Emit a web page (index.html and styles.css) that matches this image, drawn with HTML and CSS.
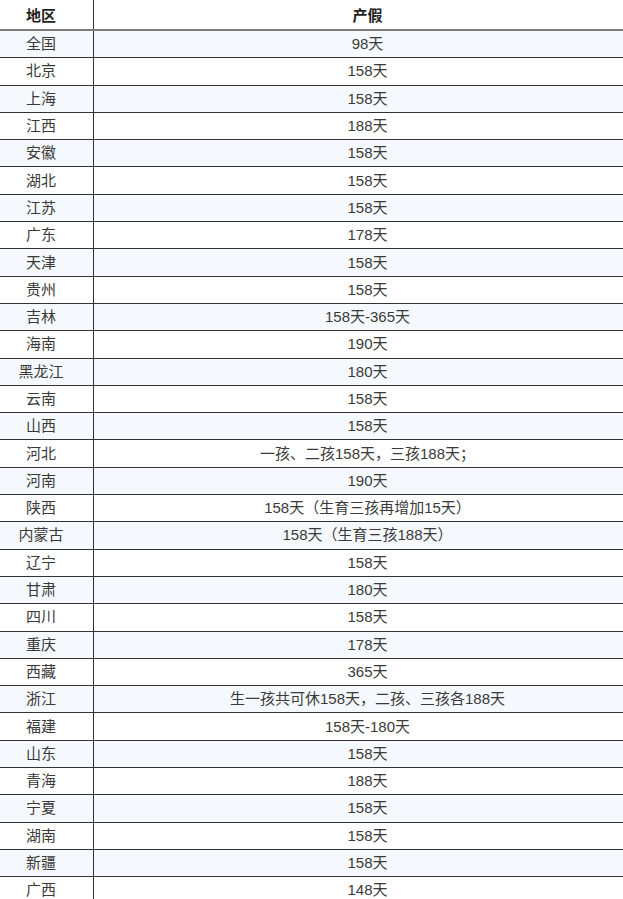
FILE: index.html
```html
<!DOCTYPE html>
<html lang="zh">
<head>
<meta charset="utf-8">
<link rel="stylesheet" href="styles.css">
</head>
<body>
<table class="leave">
<thead>
<tr><th class="c1">地区</th><th class="c2">产假</th></tr>
</thead>
<tbody>
<tr><td>全国</td><td>98天</td></tr>
<tr><td>北京</td><td>158天</td></tr>
<tr><td>上海</td><td>158天</td></tr>
<tr><td>江西</td><td>188天</td></tr>
<tr><td>安徽</td><td>158天</td></tr>
<tr><td>湖北</td><td>158天</td></tr>
<tr><td>江苏</td><td>158天</td></tr>
<tr><td>广东</td><td>178天</td></tr>
<tr><td>天津</td><td>158天</td></tr>
<tr><td>贵州</td><td>158天</td></tr>
<tr><td>吉林</td><td>158天-365天</td></tr>
<tr><td>海南</td><td>190天</td></tr>
<tr><td>黑龙江</td><td>180天</td></tr>
<tr><td>云南</td><td>158天</td></tr>
<tr><td>山西</td><td>158天</td></tr>
<tr><td>河北</td><td>一孩、二孩158天，三孩188天；</td></tr>
<tr><td>河南</td><td>190天</td></tr>
<tr><td>陕西</td><td>158天（生育三孩再增加15天）</td></tr>
<tr><td>内蒙古</td><td>158天（生育三孩188天）</td></tr>
<tr><td>辽宁</td><td>158天</td></tr>
<tr><td>甘肃</td><td>180天</td></tr>
<tr><td>四川</td><td>158天</td></tr>
<tr><td>重庆</td><td>178天</td></tr>
<tr><td>西藏</td><td>365天</td></tr>
<tr><td>浙江</td><td>生一孩共可休158天，二孩、三孩各188天</td></tr>
<tr><td>福建</td><td>158天-180天</td></tr>
<tr><td>山东</td><td>158天</td></tr>
<tr><td>青海</td><td>188天</td></tr>
<tr><td>宁夏</td><td>158天</td></tr>
<tr><td>湖南</td><td>158天</td></tr>
<tr><td>新疆</td><td>158天</td></tr>
<tr><td>广西</td><td>148天</td></tr>
</tbody>
</table>
</body>
</html>
```
FILE: styles.css
```css
html, body {
  margin: 0;
  padding: 0;
  background: #ffffff;
}
.leave {
  width: 623px;
  border-collapse: collapse;
  table-layout: fixed;
  font-family: "Liberation Sans", "Noto Sans CJK SC", sans-serif;
  font-size: 15px;
  color: #3a3a3a;
}
.leave th, .leave td {
  padding: 0;
  text-align: center;
  vertical-align: middle;
  white-space: nowrap;
}
.leave th {
  height: 29px;
  font-weight: bold;
  color: #222222;
  border-bottom: 2px solid #7c7c7c;
}
.leave .c1 {
  width: 82px;
}
.leave th:first-child, .leave td:first-child {
  border-right: 1px solid #333333;
  padding-right: 11px;
}
.leave th:last-child, .leave td:last-child {
  padding-left: 18px;
}
.leave td {
  height: 26.3px;
  border-bottom: 1px solid #333333;
  line-height: 18px;
}
.leave tbody tr:nth-child(odd) td {
  background: #f5f9fd;
}
.leave tbody tr:nth-child(even) td {
  background: #ffffff;
}
```
